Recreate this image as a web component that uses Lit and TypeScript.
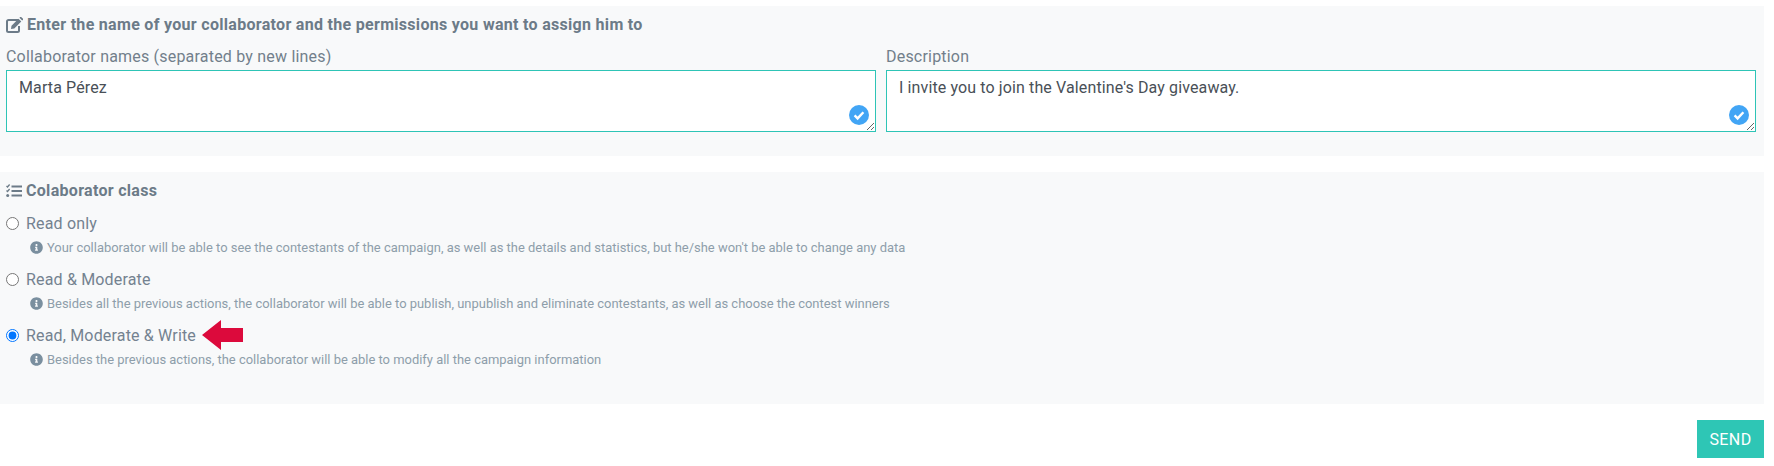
import { LitElement, html, css, svg } from "lit";
import { customElement } from "lit/decorators.js";

const info = svg`<path d="M256 8C119.043 8 8 119.083 8 256c0 136.997 111.043 248 248 248s248-111.003 248-248C504 119.083 392.957 8 256 8zm0 110c23.196 0 42 18.804 42 42s-18.804 42-42 42-42-18.804-42-42 18.804-42 42-42zm56 254c0 6.627-5.373 12-12 12h-88c-6.627 0-12-5.373-12-12v-24c0-6.627 5.373-12 12-12h12v-64h-12c-6.627 0-12-5.373-12-12v-24c0-6.627 5.373-12 12-12h64c6.627 0 12 5.373 12 12v100h12c6.627 0 12 5.373 12 12v24z"/>`;

const options = [
  { label: "Read only", help: "Your collaborator will be able to see the contestants of the campaign, as well as the details and statistics, but he/she won't be able to change any data", checked: false },
  { label: "Read & Moderate", help: "Besides all the previous actions, the collaborator will be able to publish, unpublish and eliminate contestants, as well as choose the contest winners", checked: false },
  { label: "Read, Moderate & Write", help: "Besides the previous actions, the collaborator will be able to modify all the campaign information", checked: true },
];

@customElement("app-root")
export class AppRoot extends LitElement {
  static styles = css`
    :host {
      display: block;
      box-sizing: border-box;
      width: 1774px;
      height: 466px;
      padding: 6px 10px 0 0;
      background: #fff;
      font-family: "Roboto", "Liberation Sans", sans-serif;
      color: #6c7b88;
      overflow: hidden;
    }
    * { box-sizing: border-box; }
    .panel { background: #f8f9fa; }
    .first { height: 150px; padding: 10px 8px 0 6px; }
    .second { height: 232px; margin-top: 16px; padding: 10px 6px 0 6px; }
    .title {
      display: flex;
      align-items: center;
      gap: 4px;
      margin: 0;
      font-size: 16px;
      font-weight: 700;
      letter-spacing: 0.3px;
      line-height: 18px;
      color: #6c7b88;
    }
    .title svg { flex: none; display: block; }
    .fields {
      display: grid;
      grid-template-columns: 870px 870px;
      gap: 10px;
      margin-top: 13px;
    }
    .field label {
      display: block;
      font-size: 16px;
      letter-spacing: 0.2px;
      line-height: 20px;
      color: #727f8b;
    }
    .wrap { position: relative; margin-top: 3px; }
    textarea {
      display: block;
      width: 100%;
      height: 62px;
      padding: 7px 12px;
      border: 1px solid #2ec4b6;
      border-radius: 0;
      outline: none;
      background: #fff;
      font: 400 16px/20px "Roboto", "Liberation Sans", sans-serif;
      letter-spacing: 0.12px;
      color: #495057;
      resize: vertical;
    }
    .ok { position: absolute; right: 7px; bottom: 7.500px; display: block; }
    .opts { margin-top: 11px; }
    .opt { height: 56px; }
    .radio {
      display: flex;
      align-items: center;
      height: 24px;
      font-size: 16px;
      letter-spacing: 0.17px;
      color: #748290;
    }
    .radio input { margin: 0 7px 0 0; width: 13px; height: 13px; flex: none; }
    .arrow { display: block; margin-left: 6px; flex: none; }
    .help {
      display: flex;
      align-items: center;
      gap: 4px;
      height: 20px;
      margin-top: 2px;
      padding-left: 24px;
      font-size: 12.95px;
      color: #8e9eaa;
    }
    .help svg { flex: none; fill: #7a8f9f; display: block; }
    .actions { display: flex; justify-content: flex-end; margin-top: 16px; }
    button {
      width: 67px;
      height: 38px;
      border: 0;
      background: #2ec6b5;
      color: #fff;
      font: 400 16px "Roboto", "Liberation Sans", sans-serif;
      letter-spacing: 0.4px;
      padding: 0;
    }
  `;

  private check() {
    return html`<svg class="ok" width="20" height="20" viewBox="0 0 20 20">
      <circle cx="10" cy="10" r="10" fill="#42a5f5"></circle>
      <path d="M5.600 10.400l3 3 5.800-6.200" fill="none" stroke="#fff" stroke-width="2.400"></path>
    </svg>`;
  }

  render() {
    return html`
      <section class="panel first">
        <h2 class="title">
          <svg width="17" height="16" viewBox="0 0 17 16">
            <path d="M12 3H2.500A1.500 1.500 0 0 0 1 4.500v9A1.500 1.500 0 0 0 2.500 15h9a1.500 1.500 0 0 0 1.500-1.500V9" fill="none" stroke="#6c7b88" stroke-width="2"></path>
            <path d="M5.500 8.700L12.500 1.700l2.800 2.800-7 7-3.300.5zM13.400.8l.6-.6a1 1 0 0 1 1.400 0l1.400 1.400a1 1 0 0 1 0 1.400l-.6.600z" fill="#6c7b88"></path>
          </svg>
          Enter the name of your collaborator and the permissions you want to assign him to
        </h2>
        <div class="fields">
          <div class="field">
            <label>Collaborator names (separated by new lines)</label>
            <div class="wrap"><textarea .value=${"Marta Pérez"}></textarea>${this.check()}</div>
          </div>
          <div class="field">
            <label>Description</label>
            <div class="wrap"><textarea .value=${"I invite you to join the Valentine's Day giveaway."}></textarea>${this.check()}</div>
          </div>
        </div>
      </section>
      <section class="panel second">
        <h2 class="title">
          <svg width="16" height="14" viewBox="0 0 16 14" fill="#6c7b88">
            <path d="M5.500 1.500h10.500v2H5.500zM5.500 6h10.500v2H5.500zM5.500 10.500h10.500v2H5.500z"></path>
            <path d="M.5 2l1 1L3.600.5" fill="none" stroke="#6c7b88" stroke-width="1.300"></path>
            <path d="M.5 6.500l1 1L3.600 5" fill="none" stroke="#6c7b88" stroke-width="1.300"></path>
            <circle cx="1.700" cy="11.500" r="1.500"></circle>
          </svg>
          Colaborator class
        </h2>
        <div class="opts">
          ${options.map(
            (o) => html`<div class="opt">
              <label class="radio">
                <input type="radio" name="cls" ?checked=${o.checked} />
                ${o.label}
                ${o.checked
                  ? html`<svg class="arrow" width="41" height="30" viewBox="0 0 41 30"><path d="M0 15L19 0v8h22v14H19v8z" fill="#dc0a3c"></path></svg>`
                  : ""}
              </label>
              <div class="help">
                <svg width="13" height="13" viewBox="0 0 512 512">${info}</svg>
                <span>${o.help}</span>
              </div>
            </div>`
          )}
        </div>
      </section>
      <div class="actions"><button>SEND</button></div>
    `;
  }
}
